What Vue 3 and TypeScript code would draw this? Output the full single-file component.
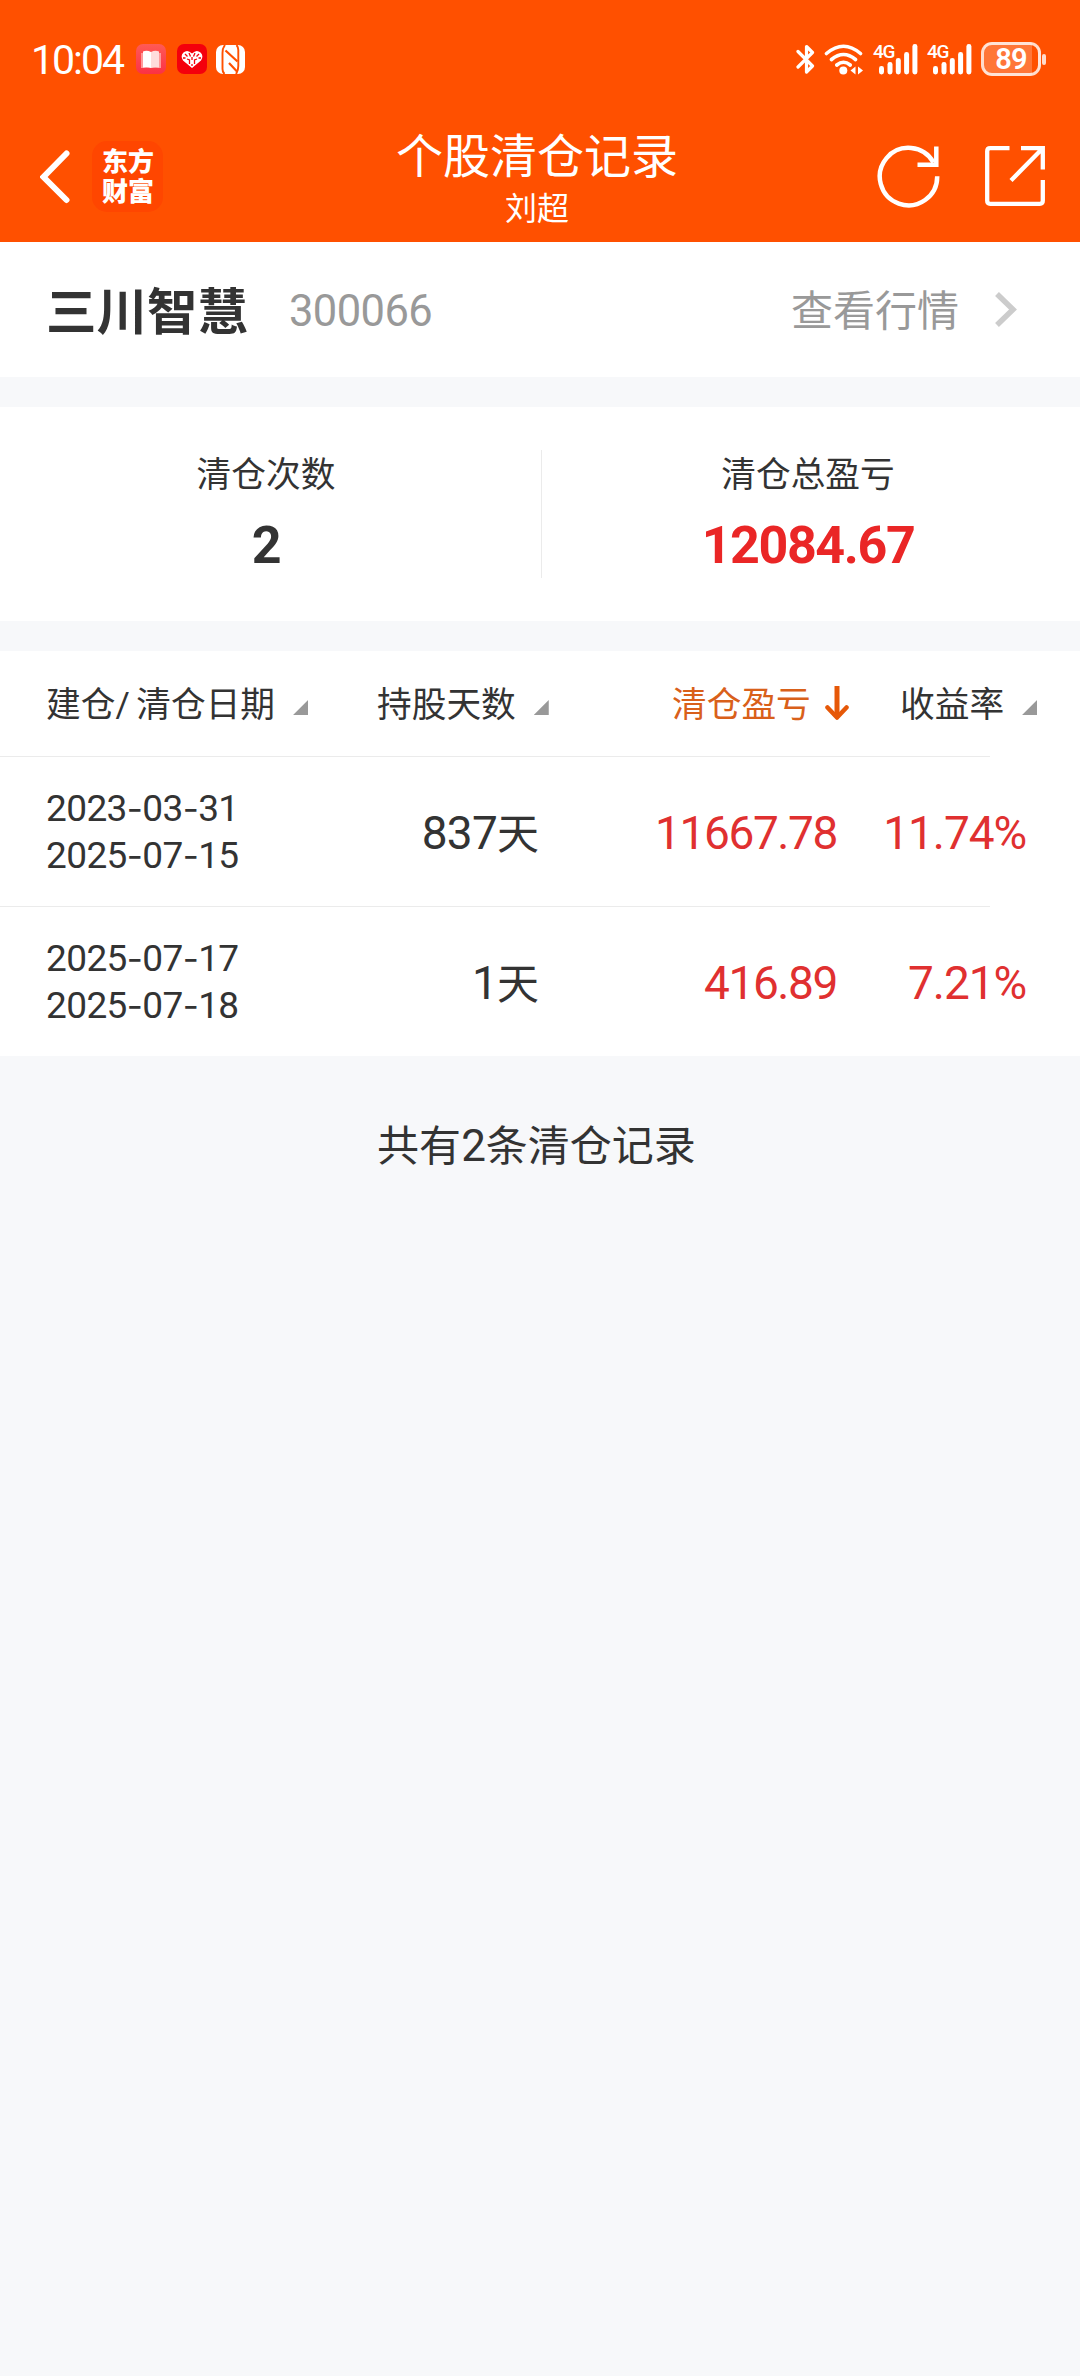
<script setup lang="ts">
interface ClearRecord {
  opened: string
  closed: string
  days: number
  profit: string
  rate: string
}

const records: ClearRecord[] = [
  { opened: '2023-03-31', closed: '2025-07-15', days: 837, profit: '11667.78', rate: '11.74%' },
  { opened: '2025-07-17', closed: '2025-07-18', days: 1, profit: '416.89', rate: '7.21%' },
]

const signalBars = [
  { x: 6, top: 22 },
  { x: 14.5, top: 18 },
  { x: 22.8, top: 14 },
  { x: 31.1, top: 8 },
  { x: 39.4, top: 0 },
]

const dateParts = (value: string): string[] => value.split('-')
</script>

<template>
  <div class="page">
    <header class="header">
      <div class="status">
        <span class="clock">10:04</span>
        <svg class="app-book" width="30" height="30" viewBox="0 0 30 30">
          <defs>
            <linearGradient id="book" x1="0" y1="0" x2="0" y2="1">
              <stop offset="0" stop-color="#ff5a55" />
              <stop offset="1" stop-color="#fb3145" />
            </linearGradient>
          </defs>
          <rect width="30" height="30" rx="7" fill="url(#book)" />
          <path d="M5 9h20v15H5z" fill="#ff9a9a" />
          <path d="M7 7.5q4-1.500 8 .5v16q-4-1.500-8-.5z" fill="#fff" />
          <path d="M15 8q4-2 8-.5v16q-4-1-8 .5z" fill="#ffdcdc" />
        </svg>
        <svg class="app-heart" width="30" height="30" viewBox="0 0 30 30">
          <rect width="30" height="30" rx="7" fill="#f4000c" />
          <path d="M15 24 6 16.500Q3 12 6.500 8.500 10.500 5 15 9.500 19.500 5 23.500 8.500 27 12 24 16.500z" fill="#fff" />
          <path d="M8 10l2.500 2.500M12 9l1.500 3.500M18 9l-1.500 3.500M22 10l-2.500 2.500M10 15l2.500 1v4M20 15l-2.500 1v4M15 13v3M6 14h2.500M21.500 14h2.500M15 20v2" fill="none" stroke="#f4000c" stroke-width="1.300" />
        </svg>
        <svg class="nfc" width="29" height="29" viewBox="0 0 29 29">
          <rect width="29" height="29" rx="7" fill="#fff" />
          <path d="M9 0Q6.500 3 6.500 8V24Q6.500 27 8.500 29M20 29Q22.300 26 22.300 21V5Q22.300 2 20.500 0" fill="none" stroke="#ff5000" stroke-width="1.900" />
          <path d="M9.500 5.500 21.500 16.500M13 18 21 26.500" fill="none" stroke="#ff5000" stroke-width="2.200" />
        </svg>

        <div class="status-right">
          <svg width="20" height="31" viewBox="0 0 20 31">
            <path d="M2 7.500 16.500 22 10.500 28V2.500L16.500 8.500 2 23" fill="none" stroke="#fff" stroke-width="3.200" stroke-linejoin="round" stroke-linecap="round" />
          </svg>
          <svg class="wifi" width="40" height="31" viewBox="0 0 40 31">
            <path d="M2.500 9.500Q19.500-5 36.500 9.500M7.500 15.500Q19.500 5.500 31.500 15.500M12.800 21Q19.500 15.500 26.200 21" fill="none" stroke="#fff" stroke-width="3.600" stroke-linecap="round" />
            <circle cx="19.300" cy="26.500" r="4" fill="#fff" />
            <path d="M31.500 22.500v8L26.500 26.500zM34 22.500v8l5-4z" fill="#fff" />
          </svg>
          <span v-for="n in 2" :key="n" class="signal">
            <svg width="45" height="31" viewBox="0 0 45 31">
              <rect v-for="bar in signalBars" :key="bar.x" :x="bar.x" :y="bar.top" width="5" :height="30.5 - bar.top" rx="2.400" fill="#fff" />
            </svg>
            <span class="net">4G</span>
          </span>
          <span class="battery"><span class="level">89</span></span>
          <span class="nub"></span>
        </div>
      </div>

      <nav class="nav">
        <svg class="back" width="30" height="54" viewBox="0 0 30 54">
          <path d="M26.500 3.500 3.500 27 26.500 50" fill="none" stroke="#fff" stroke-width="6" stroke-linecap="round" />
        </svg>
        <div class="logo"><span>东方</span><span>财富</span></div>
        <div class="titles">
          <h1>个股清仓记录</h1>
          <p>刘超</p>
        </div>
        <svg class="refresh" width="64" height="64" viewBox="0 0 64 64">
          <path d="M60.200 32.300A28.700 28.700 0 1 1 56.500 18.500" fill="none" stroke="#fff" stroke-width="4.500" />
          <path d="M59.300 2.500V20.700H40.500" fill="none" stroke="#fff" stroke-width="4.500" />
        </svg>
        <svg class="share" width="60" height="60" viewBox="0 0 60 60">
          <path d="M24.500 2.200H5.200Q2.200 2.200 2.200 5.200V54.800Q2.200 57.800 5.200 57.800H54.800Q57.800 57.800 57.800 54.800V34" fill="none" stroke="#fff" stroke-width="4.300" />
          <path d="M36 2.200H57.800V23.500M57 3 26 34.500" fill="none" stroke="#fff" stroke-width="4.300" />
        </svg>
      </nav>
    </header>

    <section class="stock">
      <strong>三川智慧</strong>
      <span class="code">300066</span>
      <a class="quote">查看行情</a>
      <svg class="more" width="23" height="35" viewBox="0 0 23 35">
        <path d="M2 2 18 17.500 2 33" fill="none" stroke="#ccc" stroke-width="5.500" />
      </svg>
    </section>

    <section class="summary">
      <div class="cell count">
        <span class="label">清仓次数</span>
        <b>2</b>
      </div>
      <i class="divider"></i>
      <div class="cell total">
        <span class="label">清仓总盈亏</span>
        <b>12084.67</b>
      </div>
    </section>

    <section class="table">
      <div class="thead">
        <span class="th th-date">建仓/ 清仓日期<i class="corner"></i></span>
        <span class="th th-days">持股天数<i class="corner"></i></span>
        <span class="th th-profit">清仓盈亏
          <svg width="24" height="34" viewBox="0 0 24 34">
            <path d="M12 0V29" stroke="#e65808" stroke-width="5" />
            <path d="M2.500 21.500 12 31.500 21.500 21.500" fill="none" stroke="#e65808" stroke-width="4.500" stroke-linecap="round" stroke-linejoin="round" />
          </svg>
        </span>
        <span class="th th-rate">收益率<i class="corner"></i></span>
      </div>
      <div v-for="record in records" :key="record.closed" class="row">
        <div class="dates">
          <span v-for="date in [record.opened, record.closed]" :key="date" class="date"><template v-for="(part, i) in dateParts(date)" :key="i"><span v-if="i > 0" class="dash">-</span>{{ part }}</template></span>
        </div>
        <span class="days">{{ record.days }}<span class="unit">天</span></span>
        <span class="profit">{{ record.profit }}</span>
        <span class="rate">{{ record.rate }}</span>
      </div>
    </section>

    <p class="footer">共有<span>2</span>条清仓记录</p>
  </div>
</template>

<style>
body {
  margin: 0;
  background: #f7f8fa;
}
</style>

<style scoped>
.page {
  width: 1080px;
  min-height: 2376px;
  background: #f7f8fa;
  color: #333;
  font-family: Roboto, "Noto Sans CJK SC", sans-serif;
}
.page * {
  box-sizing: border-box;
}
h1,
p {
  margin: 0;
  font-weight: 400;
}
svg {
  display: block;
  flex: none;
}
.header {
  height: 242px;
  background: #ff5000;
  color: #fff;
}
.status {
  display: flex;
  height: 110px;
  padding: 44px 34px 0 31px;
}
.clock {
  width: 105px;
  height: 31px;
  line-height: 32px;
  font-size: 41px;
  letter-spacing: -2px;
  white-space: nowrap;
}
.app-heart {
  margin-left: 11px;
}
.nfc {
  margin: 1px 0 0 9px;
}
.status-right {
  display: flex;
  margin-left: auto;
}
.wifi {
  margin-left: 8px;
  margin-right: 9px;
}
.signal {
  position: relative;
  width: 54px;
}
.net {
  position: absolute;
  left: 0;
  top: 1px;
  line-height: 14px;
  font-size: 19px;
  font-weight: 500;
  letter-spacing: -1.2px;
}
.battery {
  width: 60px;
  height: 34px;
  margin: -2px 0 0 0;
  border: 3px solid rgba(255, 255, 255, 0.8);
  border-radius: 11px;
  background: linear-gradient(to right, rgba(255, 255, 255, 0.22) 48px, transparent 48px);
}
.level {
  display: block;
  text-align: center;
  line-height: 29px;
  font-size: 29px;
  font-weight: 600;
  letter-spacing: -0.8px;
}
.nub {
  width: 4px;
  height: 11px;
  margin: 10px 0 0 1px;
  border-radius: 2px;
  background: rgba(255, 255, 255, 0.8);
}
.nav {
  display: flex;
  height: 132px;
  padding-left: 40px;
}
.back {
  margin-top: 40px;
}
.logo {
  display: flex;
  flex-direction: column;
  flex: none;
  width: 71px;
  height: 71px;
  margin: 31px 0 0 22px;
  padding: 6px 0 0 10px;
  border-radius: 15px;
  background: #ff4600;
  font-size: 26px;
  font-weight: 900;
  line-height: 30px;
  white-space: nowrap;
}
.titles {
  width: 540px;
  margin-left: 104px;
  padding-top: 17px;
  text-align: center;
}
.titles h1 {
  font-size: 47px;
  line-height: 60px;
}
.titles p {
  font-size: 32px;
  line-height: 44px;
}
.refresh {
  margin: 34px 0 0 70px;
}
.share {
  margin: 36px 0 0 44px;
}
.stock {
  display: flex;
  align-items: center;
  height: 135px;
  padding: 0 62px 0 46px;
  background: #fff;
}
.stock strong {
  width: 243px;
  font-size: 50.5px;
  font-weight: 700;
  line-height: 60px;
  padding-top: 6px;
}
.code {
  color: #999;
  font-size: 43.5px;
  letter-spacing: -0.6px;
  padding-top: 4px;
}
.quote {
  margin-left: auto;
  color: #999;
  font-size: 42px;
  line-height: 60px;
  padding-top: 5px;
}
.more {
  margin: 0 0 0 36px;
}
.summary {
  display: flex;
  height: 214px;
  margin-top: 30px;
  background: #fff;
}
.cell {
  display: flex;
  flex: 1;
  flex-direction: column;
  align-items: center;
  padding-top: 43px;
}
.count {
  padding-right: 9px;
}
.total {
  padding-right: 6px;
}
.label {
  font-size: 34.7px;
  line-height: 50px;
}
.cell b {
  margin-top: 16px;
  font-size: 52px;
  font-weight: 700;
  line-height: 60px;
  letter-spacing: -1.4px;
}
.total b {
  color: #ea2626;
}
.divider {
  width: 1px;
  height: 128px;
  margin-top: 43px;
  background: #ebebeb;
}
.table {
  margin-top: 30px;
  background: #fff;
}
.thead,
.row {
  display: flex;
  background: linear-gradient(#ebebeb, #ebebeb) left bottom / 990px 1px no-repeat;
}
.thead {
  height: 106px;
  padding-left: 46px;
}
.th {
  display: flex;
  height: 104px;
  font-size: 34.7px;
  line-height: 108px;
  white-space: nowrap;
}
.corner {
  width: 15px;
  height: 15px;
  margin: 49px 0 0 18px;
  background: #999;
  clip-path: polygon(100% 0, 100% 100%, 0 100%);
}
.th-date {
  width: 331px;
  word-spacing: -2px;
}
.th-days {
  width: 295px;
}
.th-profit {
  width: 228px;
  color: #d9601a;
}
.th-profit svg {
  margin: 35px 0 0 14px;
}
.row {
  height: 150px;
  padding-left: 46px;
}
.row:last-child {
  height: 149px;
  background: none;
}
.dates {
  width: 230px;
  padding-top: 28px;
}
.date {
  display: block;
  height: 47px;
  font-size: 37px;
  line-height: 47px;
  letter-spacing: -0.6px;
  white-space: nowrap;
}
.dash {
  font-family: Inter, sans-serif;
  font-size: 35px;
}
.days,
.profit,
.rate {
  font-size: 46px;
  line-height: 153px;
  text-align: right;
  white-space: nowrap;
}
.days {
  width: 263px;
  letter-spacing: -0.8px;
}
.unit {
  font-size: 42px;
  letter-spacing: 0;
}
.profit {
  width: 298px;
  color: #e03030;
  letter-spacing: -1.4px;
}
.rate {
  width: 189px;
  color: #e03030;
  letter-spacing: -1.1px;
}
.footer {
  padding: 60px 0 0 0;
  text-align: center;
  width: 1073px;
  font-size: 42px;
  line-height: 60px;
}
.footer span {
  font-size: 44px;
}
</style>
